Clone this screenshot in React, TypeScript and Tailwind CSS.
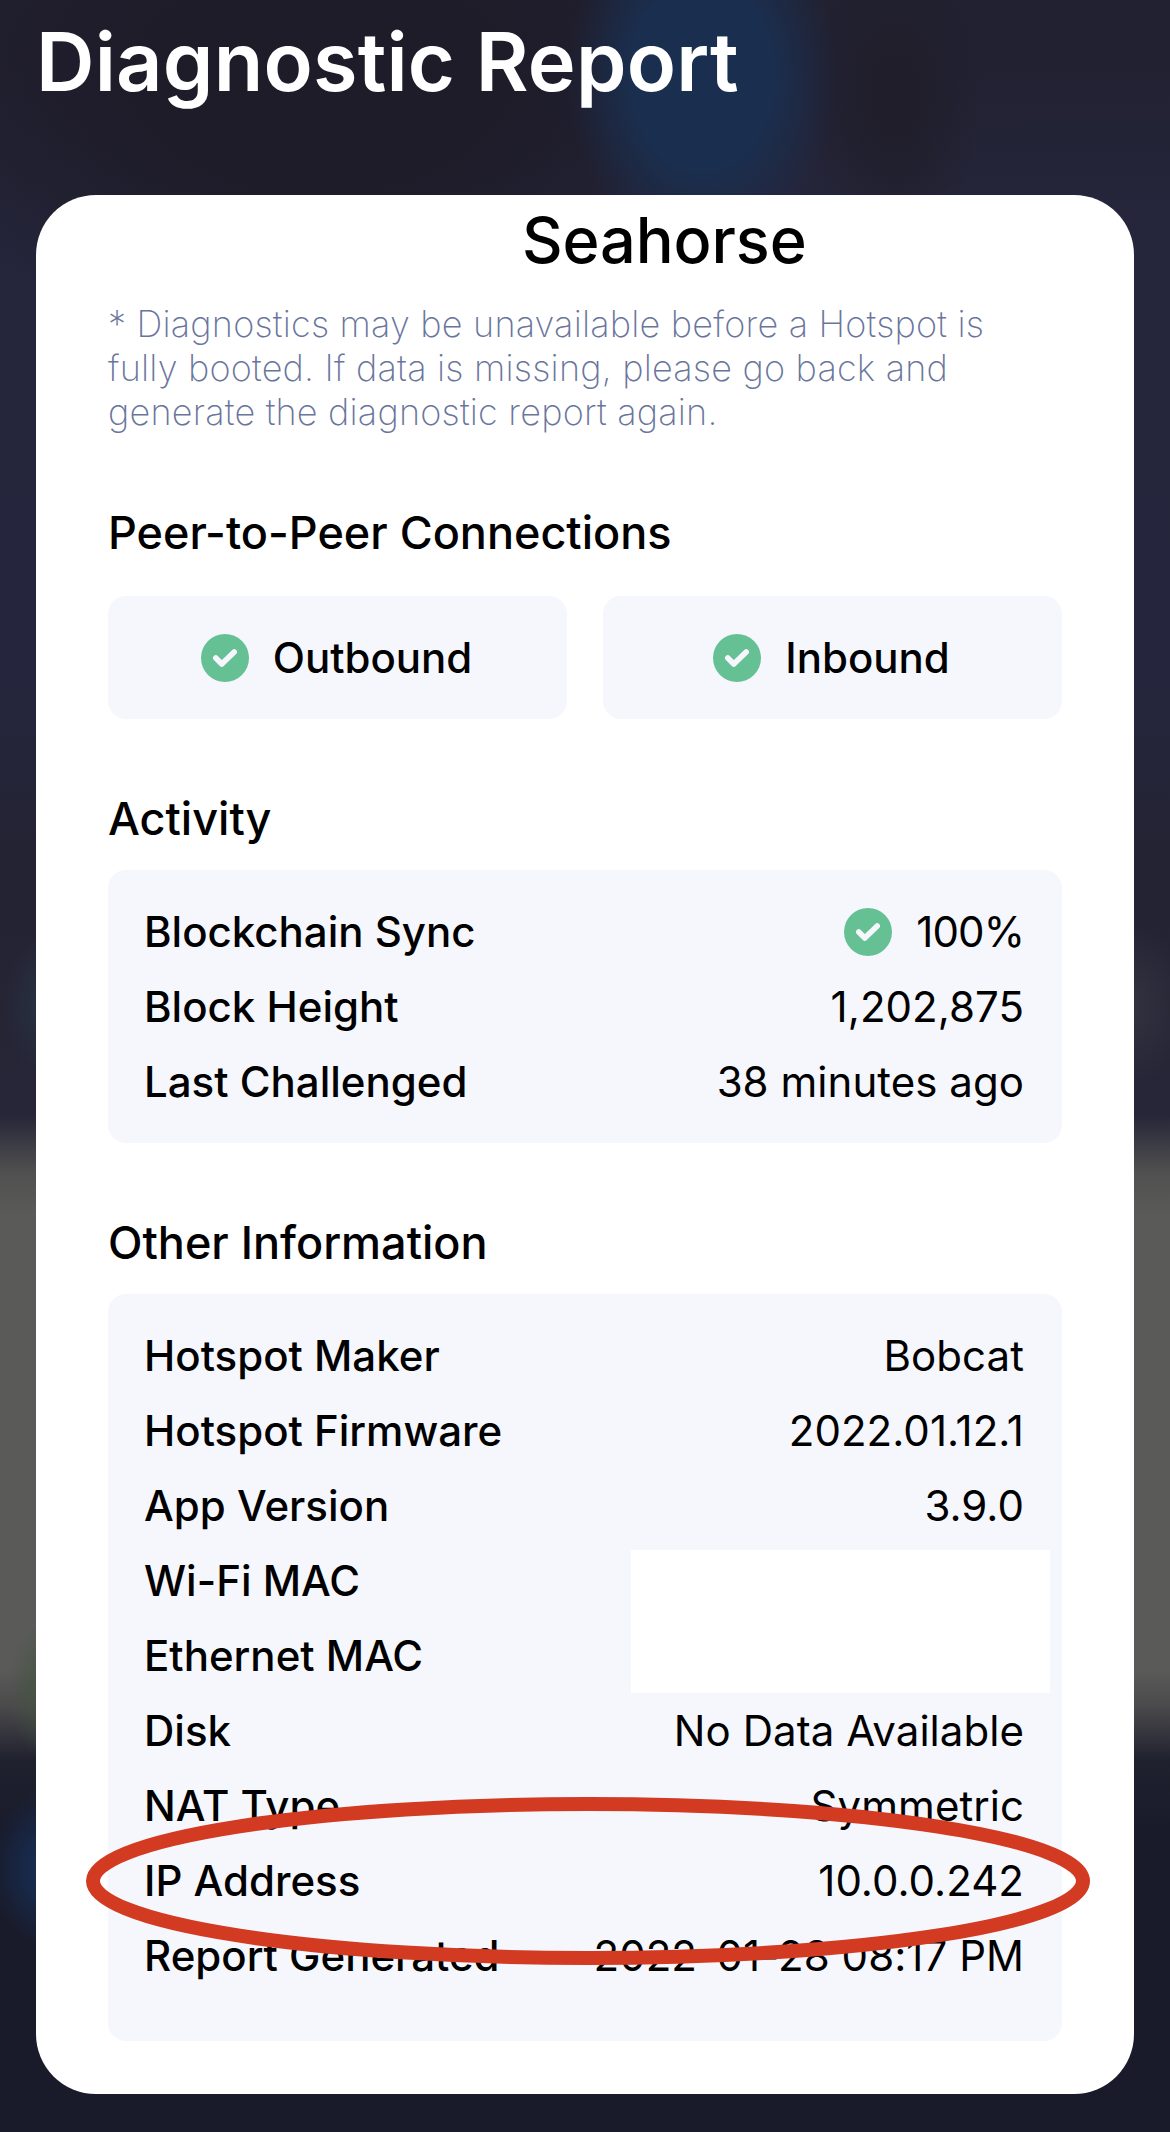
import React from "react";

type Row = {
  label: string;
  value?: string;
  ok?: boolean;
};

const connections = ["Outbound", "Inbound"];

const activity: Row[] = [
  { label: "Blockchain Sync", value: "100%", ok: true },
  { label: "Block Height", value: "1,202,875" },
  { label: "Last Challenged", value: "38 minutes ago" },
];

const otherInfo: Row[] = [
  { label: "Hotspot Maker", value: "Bobcat" },
  { label: "Hotspot Firmware", value: "2022.01.12.1" },
  { label: "App Version", value: "3.9.0" },
  { label: "Wi-Fi MAC" },
  { label: "Ethernet MAC" },
  { label: "Disk", value: "No Data Available" },
  { label: "NAT Type", value: "Symmetric" },
  { label: "IP Address", value: "10.0.0.242" },
  { label: "Report Generated", value: "2022-01-28 08:17 PM" },
];

function CheckBadge() {
  return (
    <svg viewBox="0 0 48 48" className="w-12 h-12 shrink-0">
      <circle cx="24" cy="24" r="24" fill="#65c194" />
      <path
        d="M14.8 24 L20.8 30 L33.2 18"
        fill="none"
        stroke="#f6f7fd"
        strokeWidth="5.6"
        strokeLinecap="round"
        strokeLinejoin="round"
      />
    </svg>
  );
}

function InfoRow({ label, value, ok }: Row) {
  return (
    <div className="flex items-center justify-between h-[75px] text-[42px] whitespace-nowrap">
      <span className="font-medium">{label}</span>
      <span className={`flex items-center gap-6 ${ok ? "tracking-[-0.9px]" : "tracking-[0.05px]"}`}>
        {ok && <CheckBadge />}
        {value}
      </span>
    </div>
  );
}

function Section({ title, children }: { title: string; children: React.ReactNode }) {
  return (
    <section className="flex flex-col gap-[21px]">
      <h2 className="text-[45px] leading-[60px] font-medium">{title}</h2>
      {children}
    </section>
  );
}

export default function App() {
  return (
    <div className="h-[2132px] px-9 overflow-hidden font-['Inter',sans-serif] text-black bg-[radial-gradient(135px_180px_at_702px_75px,#1a2f50_0%,#1a2f50_50%,#1a2f5080_75%,#1a2f5000_100%),radial-gradient(90px_150px_at_895px_100px,#201e2a_20%,#201e2a00_100%),radial-gradient(460px_280px_at_320px_80px,#1e1c29_40%,#1e1c2900_100%),radial-gradient(40px_70px_at_45px_1005px,#283243_0%,#28324300_100%),radial-gradient(60px_80px_at_1130px_1005px,#32333f_0%,#32333f00_100%),radial-gradient(42px_70px_at_50px_1690px,#43543f_0%,#43543f00_100%),radial-gradient(62px_80px_at_52px_1868px,#17305a_10%,#17305a00_100%),linear-gradient(180deg,#222131_0px,#222132_60px,#25263c_230px,#25263d_680px,#242333_880px,#262638_1115px,#505050_1172px,#5a5a59_1215px,#5a5a59_1670px,#4b4b4c_1705px,#20212f_1760px,#191b2a_1830px,#191b2a_2132px)]">
      <h1 className="h-[195px] text-[81px] leading-[125px] font-semibold tracking-[0.2px] text-white whitespace-nowrap">
        Diagnostic Report
      </h1>

      <main className="flex flex-col h-[1899px] px-[72px] rounded-[60px] bg-white">
        <p className="pl-[414px] text-[63px] leading-[90px] font-medium tracking-[-0.1px]">Seahorse</p>
        <p className="pt-[17px] pb-[69px] text-[36px] leading-[44px] font-extralight tracking-[0.2px] text-[#6a759c] whitespace-nowrap">
          * Diagnostics may be unavailable before a Hotspot is
          <br />
          fully booted. If data is missing, please go back and
          <br />
          generate the diagnostic report again.
        </p>

        <div className="flex flex-col gap-[70px]">
          <section className="flex flex-col gap-[33px]">
            <h2 className="text-[45px] leading-[60px] font-medium">Peer-to-Peer Connections</h2>
            <div className="grid grid-cols-2 gap-9">
              {connections.map((name) => (
                <div
                  key={name}
                  className="flex items-center justify-center gap-6 h-[123px] pr-0.5 rounded-[18px] bg-[#f6f7fd] text-[42px] font-medium"
                >
                  <CheckBadge />
                  {name}
                </div>
              ))}
            </div>
          </section>

          <Section title="Activity">
            <div className="pl-9 pr-[38px] py-6 rounded-[18px] bg-[#f6f7fd]">
              {activity.map((row) => (
                <InfoRow key={row.label} {...row} />
              ))}
            </div>
          </Section>

          <Section title="Other Information">
            <div className="relative pl-9 pr-[38px] pt-6 pb-12 rounded-[18px] bg-[#f6f7fd]">
              {otherInfo.map((row) => (
                <InfoRow key={row.label} {...row} />
              ))}
              {/* hides both MAC addresses */}
              <div className="absolute left-[523px] top-[256px] w-[419px] h-[143px] bg-white" />
              {/* highlight around the IP address */}
              <svg viewBox="0 0 1004 168" className="absolute -left-[22px] top-[503px] w-[1004px] h-[168px] max-w-none">
                <ellipse cx="502" cy="84" rx="495" ry="77" fill="none" stroke="#d23a21" strokeWidth="14" />
              </svg>
            </div>
          </Section>
        </div>
      </main>
    </div>
  );
}
